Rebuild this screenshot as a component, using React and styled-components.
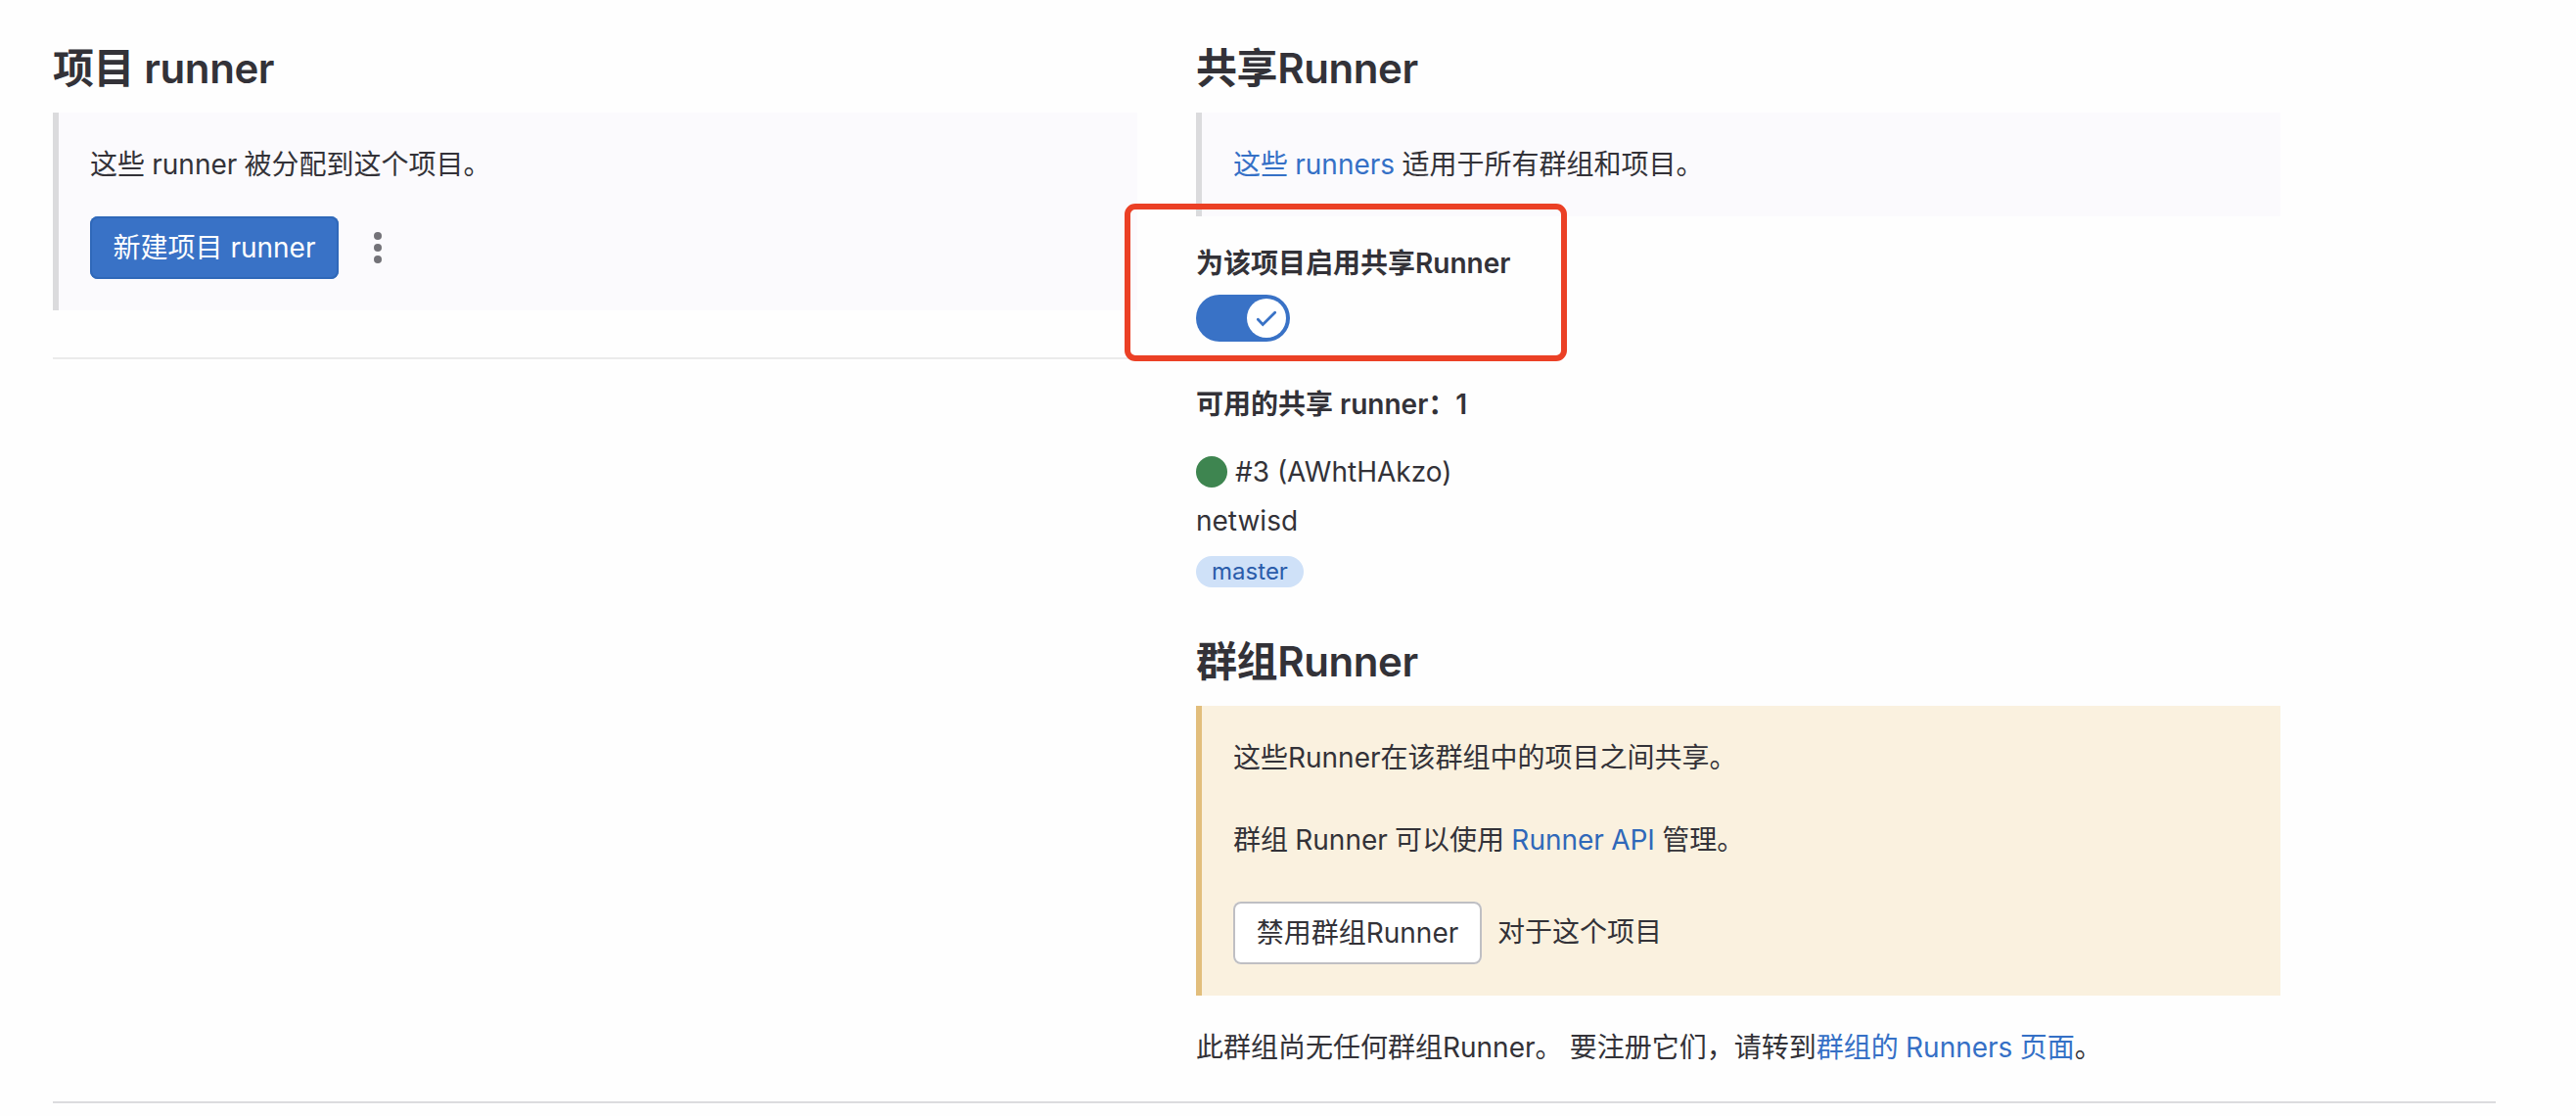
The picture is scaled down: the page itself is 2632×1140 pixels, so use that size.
import React, { useState } from 'react';
import styled, { createGlobalStyle } from 'styled-components';

const GlobalStyle = createGlobalStyle`
    * {
        box-sizing: border-box;
    }
    body {
        margin: 0;
        background: #fefefe;
        color: #333238;
        font-family: Inter, 'Noto Sans CJK SC', sans-serif;
        font-size: 28px;
        line-height: 42px;
    }
`;

const Page = styled.main`
    width: 2632px;
    height: 1140px;
    padding: 45px 82px 0 54px;
    overflow: hidden;
`;
const Columns = styled.div`
    display: grid;
    grid-template-columns: 1108px 1108px;
    column-gap: 60px;
    height: 1080px;
`;
const Column = styled.section`
    position: relative;
`;
const Heading = styled.h4`
    margin: 0 0 20px;
    font-size: 42px;
    font-weight: 600;
    line-height: 50px;
    letter-spacing: -0.01em;
    white-space: nowrap;
`;
const Callout = styled.div`
    display: flex;
    flex-direction: column;
    gap: ${(props) => props.$gap || 32}px;
    padding: 32px;
    border-left: 6px solid ${(props) => (props.$warning ? '#e2be7c' : '#dbdbdd')};
    background: ${(props) => (props.$warning ? '#faf1df' : '#fbfafd')};
`;
const Text = styled.p`
    margin: 0;
    white-space: pre;
    word-spacing: -0.6px;
`;
const Link = styled.a`
    color: ${(props) => (props.$dark ? '#2f68b9' : '#3570c6')};
    text-decoration: none;
`;
const Actions = styled.div`
    display: flex;
    align-items: center;
    gap: ${(props) => props.$gap}px;
`;
const ActionText = styled(Text)`
    padding-bottom: 3px;
`;
const Button = styled.button`
    width: 254px;
    height: 64px;
    padding: 0;
    border: 0;
    border-radius: 8px;
    background: ${(props) => (props.$confirm ? '#3972c6' : '#fff')};
    box-shadow: inset 0 0 0 2px
        ${(props) => (props.$confirm ? '#2f68b9' : '#bfbfc3')};
    color: ${(props) => (props.$confirm ? '#fff' : '#333238')};
    font: inherit;
    white-space: nowrap;
`;
const MenuButton = styled.button`
    display: flex;
    padding: 0;
    border: 0;
    background: none;
`;
const Divider = styled.hr`
    height: 2px;
    margin: ${(props) => props.$top || 0}px 0 0;
    border: 0;
    background: ${(props) => props.$color};
`;
const ToggleField = styled.div`
    margin-top: 27px;
`;
const Label = styled.div`
    font-weight: 600;
    white-space: pre;
`;
const Toggle = styled.button`
    display: flex;
    justify-content: ${(props) => (props.$on ? 'flex-end' : 'flex-start')};
    width: 96px;
    height: 48px;
    margin-top: 11px;
    padding: 4px;
    border: 0;
    border-radius: 24px;
    background: ${(props) => (props.$on ? '#3972c6' : '#737278')};
`;
const Knob = styled.span`
    display: flex;
    width: 40px;
    height: 40px;
    border-radius: 50%;
    background: #fff;
`;
const Highlight = styled.div`
    position: absolute;
    top: 163px;
    left: -73px;
    width: 452px;
    height: 161px;
    border: 6px solid #eb4025;
    border-radius: 11px;
    pointer-events: none;
`;
const RunnerList = styled.div`
    margin-top: 43px;
`;
const RunnerRow = styled.div`
    display: flex;
    align-items: center;
    gap: 8px;
    margin-top: 27px;
`;
const StatusDot = styled.span`
    width: 32px;
    height: 32px;
    border-radius: 50%;
    background: #3e8550;
`;
const RunnerName = styled.div`
    margin-top: 8px;
`;
const Badge = styled.span`
    display: block;
    width: 110px;
    height: 32px;
    margin: 15px 0 51px;
    border-radius: 16px;
    background: #cfe1f8;
    color: #2a5caa;
    font-size: 24px;
    line-height: 32px;
    text-align: center;
`;
const Footnote = styled(Text)`
    margin-top: 32px;
`;

function CheckIcon() {
    return (
        <svg width="40" height="40" viewBox="0 0 40 40" fill="none">
            <path
                d="M11.3 21.3 L16.3 26.5 L28.7 14.3"
                stroke="#3972c6"
                strokeWidth="2.8"
                strokeLinecap="round"
            />
        </svg>
    );
}

function EllipsisIcon() {
    return (
        <svg width="32" height="32" viewBox="0 0 32 32" fill="#737278">
            <circle cx="16" cy="4" r="4" />
            <circle cx="16" cy="16" r="4" />
            <circle cx="16" cy="28" r="4" />
        </svg>
    );
}

function ProjectRunners() {
    return (
        <Column>
            <Heading>项目 runner</Heading>
            <Callout>
                <Text>这些 runner 被分配到这个项目。</Text>
                <Actions $gap={24}>
                    <Button $confirm>新建项目 runner</Button>
                    <MenuButton aria-label="更多">
                        <EllipsisIcon />
                    </MenuButton>
                </Actions>
            </Callout>
            <Divider $top={48} $color="#ebebeb" />
        </Column>
    );
}

function SharedRunners() {
    const [enabled, setEnabled] = useState(true);

    return (
        <>
            <Heading>共享Runner</Heading>
            <Callout>
                <Text>
                    <Link>这些 runners</Link> 适用于所有群组和项目。
                </Text>
            </Callout>
            <ToggleField>
                <Label>为该项目启用共享Runner</Label>
                <Toggle
                    $on={enabled}
                    role="switch"
                    aria-checked={enabled}
                    onClick={() => setEnabled(!enabled)}
                >
                    <Knob>{enabled && <CheckIcon />}</Knob>
                </Toggle>
            </ToggleField>
            <RunnerList>
                <Label>可用的共享 runner：1</Label>
                <RunnerRow>
                    <StatusDot />
                    <span>#3 (AWhtHAkzo)</span>
                </RunnerRow>
                <RunnerName>netwisd</RunnerName>
                <Badge>master</Badge>
            </RunnerList>
        </>
    );
}

function GroupRunners() {
    return (
        <>
            <Heading>群组Runner</Heading>
            <Callout $warning $gap={42}>
                <Text>这些Runner在该群组中的项目之间共享。</Text>
                <Text>
                    群组 Runner 可以使用 <Link $dark>Runner API</Link> 管理。
                </Text>
                <Actions $gap={16}>
                    <Button>禁用群组Runner</Button>
                    <ActionText>对于这个项目</ActionText>
                </Actions>
            </Callout>
            <Footnote>
                此群组尚无任何群组Runner。 要注册它们，请转到
                <Link>群组的 Runners 页面</Link>。
            </Footnote>
        </>
    );
}

function App() {
    return (
        <Page>
            <GlobalStyle />
            <Columns>
                <ProjectRunners />
                <Column>
                    <SharedRunners />
                    <GroupRunners />
                    <Highlight />
                </Column>
            </Columns>
            <Divider $color="#dcdcde" />
        </Page>
    );
}

export default App;
